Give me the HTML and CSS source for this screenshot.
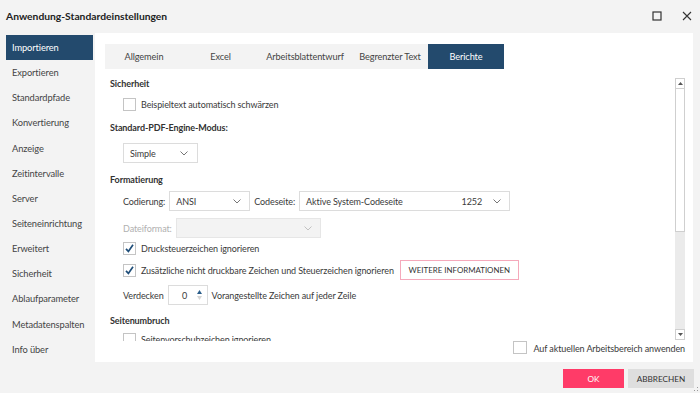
FILE: index.html
```html
<!DOCTYPE html>
<html lang="de">
<head>
  <meta charset="UTF-8" />
  <title>Anwendung-Standardeinstellungen</title>
  <link rel="stylesheet" href="styles.css">
</head>
<body>
  <div class="dialog">
    <!-- ========== TITLE BAR ========== -->
    <div class="titlebar">
      <div class="title">Anwendung-Standardeinstellungen</div>
      <div class="window-buttons">
        <svg class="win-icon" width="10" height="10" viewBox="0 0 10 10"><rect x="1" y="1" width="8" height="8" fill="none" stroke="#333" stroke-width="1.2"/></svg>
        <svg class="win-icon" width="10" height="10" viewBox="0 0 10 10"><path d="M1 1 L9 9 M9 1 L1 9" stroke="#333" stroke-width="1.1"/></svg>
      </div>
    </div>

    <div class="main">
      <!-- ========== LEFT NAV ========== -->
      <div class="nav">
        <div class="nav-item active">Importieren</div>
        <div class="nav-item">Exportieren</div>
        <div class="nav-item">Standardpfade</div>
        <div class="nav-item">Konvertierung</div>
        <div class="nav-item">Anzeige</div>
        <div class="nav-item">Zeitintervalle</div>
        <div class="nav-item">Server</div>
        <div class="nav-item">Seiteneinrichtung</div>
        <div class="nav-item">Erweitert</div>
        <div class="nav-item">Sicherheit</div>
        <div class="nav-item">Ablaufparameter</div>
        <div class="nav-item">Metadatenspalten</div>
        <div class="nav-item">Info über</div>
      </div>

      <!-- ========== PANEL ========== -->
      <div class="panel">
        <div class="tabs">
          <div class="tab">Allgemein</div>
          <div class="tab">Excel</div>
          <div class="tab">Arbeitsblattentwurf</div>
          <div class="tab">Begrenzter Text</div>
          <div class="tab active">Berichte</div>
        </div>

        <div class="body-row">
          <div class="scroll-content">
            <div class="section-title first">Sicherheit</div>
            <div class="row cb-row gap4">
              <span class="checkbox"></span>
              <span>Beispieltext automatisch schwärzen</span>
            </div>

            <div class="section-title">Standard-PDF-Engine-Modus:</div>
            <div class="row gap7">
              <div class="select select-simple">
                <span>Simple</span>
                <svg class="chevron" width="8" height="5" viewBox="0 0 8 5"><path d="M0.5 0.5 L4 4 L7.5 0.5" fill="none" stroke="#666" stroke-width="0.9"/></svg>
              </div>
            </div>

            <div class="section-title gap9">Formatierung</div>
            <div class="row gap3">
              <span class="label">Codierung:</span>
              <div class="select select-ansi">
                <span>ANSI</span>
                <svg class="chevron" width="8" height="5" viewBox="0 0 8 5"><path d="M0.5 0.5 L4 4 L7.5 0.5" fill="none" stroke="#666" stroke-width="0.9"/></svg>
              </div>
              <span class="label">Codeseite:</span>
              <div class="select select-codepage">
                <span class="grow">Aktive System-Codeseite</span>
                <span class="codepage-num">1252</span>
                <svg class="chevron" width="8" height="5" viewBox="0 0 8 5"><path d="M0.5 0.5 L4 4 L7.5 0.5" fill="none" stroke="#666" stroke-width="0.9"/></svg>
              </div>
            </div>
            <div class="row gap7">
              <span class="label disabled-label">Dateiformat:</span>
              <div class="select select-disabled">
                <span class="grow"></span>
                <svg class="chevron" width="8" height="5" viewBox="0 0 8 5"><path d="M0.5 0.5 L4 4 L7.5 0.5" fill="none" stroke="#bbb" stroke-width="0.9"/></svg>
              </div>
            </div>
            <div class="row cb-row gap2">
              <span class="checkbox checked">
                <svg width="11" height="11" viewBox="0 0 11 11"><path d="M2 5.8 L4.4 8.4 L9 1.8" fill="none" stroke="#1f4e79" stroke-width="1.7"/></svg>
              </span>
              <span>Drucksteuerzeichen ignorieren</span>
            </div>
            <div class="row btn-row gap4">
              <span class="checkbox checked">
                <svg width="11" height="11" viewBox="0 0 11 11"><path d="M2 5.8 L4.4 8.4 L9 1.8" fill="none" stroke="#1f4e79" stroke-width="1.7"/></svg>
              </span>
              <span>Zusätzliche nicht druckbare Zeichen und Steuerzeichen ignorieren</span>
              <div class="outline-btn">WEITERE INFORMATIONEN</div>
            </div>
            <div class="row gap5">
              <span class="label">Verdecken</span>
              <div class="spinner">
                <span class="spinner-value">0</span>
                <div class="spinner-arrows">
                  <svg width="5" height="4" viewBox="0 0 5 4"><path d="M0 4 L2.5 0 L5 4 Z" fill="#2a5d8a"/></svg>
                  <svg width="5" height="4" viewBox="0 0 5 4"><path d="M0 0 L2.5 4 L5 0 Z" fill="#d4d4d4"/></svg>
                </div>
              </div>
              <span>Vorangestellte Zeichen auf jeder Zeile</span>
            </div>

            <div class="section-title">Seitenumbruch</div>
            <div class="row cb-row gap2">
              <span class="checkbox"></span>
              <span>Seitenvorschubzeichen ignorieren</span>
            </div>
          </div>

          <div class="scrollbar">
            <div class="sb-btn">
              <svg width="5" height="3" viewBox="0 0 5 3"><path d="M0 3 L2.5 0 L5 3 Z" fill="#555"/></svg>
            </div>
            <div class="sb-thumb"></div>
            <div class="sb-track"></div>
            <div class="sb-btn">
              <svg width="5" height="3" viewBox="0 0 5 3"><path d="M0 0 L2.5 3 L5 0 Z" fill="#555"/></svg>
            </div>
          </div>
        </div>

        <div class="panel-footer">
          <span class="checkbox"></span>
          <span>Auf aktuellen Arbeitsbereich anwenden</span>
        </div>
      </div>
    </div>

    <!-- ========== FOOTER BUTTONS ========== -->
    <div class="footer">
      <div class="btn btn-ok">OK</div>
      <div class="btn btn-cancel">ABBRECHEN</div>
      <svg class="grip" width="5" height="5" viewBox="0 0 5 5"><rect x="3" y="0" width="1" height="1" fill="#999"/><rect x="3" y="3" width="1" height="1" fill="#999"/><rect x="0" y="3" width="1" height="1" fill="#999"/></svg>
    </div>
  </div>
</body>
</html>
```

FILE: styles.css
```css
* {
  margin: 0;
  padding: 0;
  box-sizing: border-box;
}

body {
  font-family: 'Lato', 'Noto Sans', sans-serif;
  font-size: 9px;
  letter-spacing: -0.1px;
  color: #3a3a3a;
  background: #f3f3f3;
  width: 700px;
  height: 393px;
  overflow: hidden;
}

.dialog {
  display: flex;
  flex-direction: column;
  height: 393px;
}

/* =========================================
   TITLE BAR
   ========================================= */
.titlebar {
  height: 33px;
  display: flex;
  align-items: center;
  justify-content: space-between;
  padding: 0 8px 2px 6px;
}

.title {
  font-size: 10.3px;
  font-weight: 700;
  letter-spacing: 0;
  color: #222;
}

.window-buttons {
  display: flex;
  gap: 20px;
}

/* =========================================
   MAIN AREA
   ========================================= */
.main {
  display: flex;
  height: 329px;
}

.nav {
  width: 95px;
  padding-top: 2px;
  flex-shrink: 0;
}

.nav-item {
  height: 25.15px;
  display: flex;
  align-items: center;
  padding-left: 12px;
  font-size: 9.3px;
  color: #444;
}

.nav-item.active {
  margin-left: 6px;
  width: 87px;
  padding-left: 6px;
  background: #234a6d;
  color: #fff;
}

.panel {
  flex: 1;
  background: #fff;
  margin-right: 7px;
  padding: 11px 8px 0 10px;
  display: flex;
  flex-direction: column;
}

/* Tabs */
.tabs {
  display: grid;
  grid-template-columns: 78px 75px 94px 76px 76px;
  height: 25px;
  width: 399px;
  background: #f3f3f3;
  flex-shrink: 0;
}

.tab {
  display: flex;
  align-items: center;
  justify-content: center;
  font-size: 9.2px;
  color: #444;
  white-space: nowrap;
}

.tab.active {
  background: #234a6d;
  color: #fff;
}

/* Body with scroll area */
.body-row {
  display: flex;
  height: 272px;
}

.scroll-content {
  flex: 1;
  overflow: hidden;
  padding-left: 5px;
}

.section-title {
  height: 16px;
  line-height: 16px;
  font-weight: 700;
  color: #333;
  margin-top: 8px;
}

.section-title.first {
  margin-top: 7px;
}

.row {
  display: flex;
  align-items: center;
  height: 20px;
  padding-left: 13px;
  white-space: nowrap;
}

.row.cb-row {
  height: 16px;
}

.gap2 { margin-top: 2px; }
.gap3 { margin-top: 3px; }
.gap4 { margin-top: 4px; }
.gap5 { margin-top: 5px; }
.gap7 { margin-top: 7px; }
.section-title.gap9 { margin-top: 9px; }

.label {
  margin-right: 4px;
}

.disabled-label {
  color: #b0b0b0;
}

.checkbox {
  width: 13px;
  height: 13px;
  border: 1px solid #c4c4c4;
  background: #fff;
  margin-right: 5px;
  flex-shrink: 0;
  display: flex;
  align-items: center;
  justify-content: center;
}

/* Select boxes */
.select {
  height: 20px;
  border: 1px solid #dcdcdc;
  display: flex;
  align-items: center;
  padding: 0 8px 0 6px;
  background: #fff;
}

.select .grow {
  flex: 1;
}

.select-simple {
  width: 75px;
  justify-content: space-between;
}

.select-simple .chevron {
  margin-right: 1px;
}

.select-ansi {
  width: 81px;
  justify-content: space-between;
  margin-right: 4px;
}

.select-codepage {
  width: 211px;
}

.codepage-num {
  margin-right: 11px;
}

.select-disabled {
  width: 145px;
  background: #f3f3f3;
  border-color: #e6e6e6;
}

.outline-btn {
  height: 20px;
  width: 119px;
  margin-left: 6px;
  display: flex;
  align-items: center;
  justify-content: center;
  border: 1px solid #f5a9bb;
  color: #333;
  font-size: 7.9px;
  letter-spacing: 0;
}

.btn-row {
  height: 20px;
}

/* Spinner */
.spinner {
  width: 40px;
  height: 20px;
  border: 1px solid #dcdcdc;
  display: flex;
  align-items: center;
  margin-right: 4px;
}

.spinner-value {
  flex: 1;
  text-align: center;
  padding-left: 4px;
}

.spinner-arrows {
  width: 10px;
  display: flex;
  flex-direction: column;
  gap: 2px;
}

/* Scrollbar */
.scrollbar {
  width: 10px;
  margin-top: 9px;
  height: 262px;
  display: flex;
  flex-direction: column;
}

.sb-btn {
  height: 11px;
  border: 1px solid #cfcfcf;
  background: #fff;
  display: flex;
  align-items: center;
  justify-content: center;
}

.sb-thumb {
  height: 143px;
  border: 1px solid #cfcfcf;
  border-top: none;
  background: #fff;
}

.sb-track {
  flex: 1;
  background: #ebebeb;
}

.panel-footer {
  height: 21px;
  display: flex;
  align-items: flex-start;
  justify-content: flex-end;
  white-space: nowrap;
}

.panel-footer span:last-child {
  line-height: 13px;
  margin-top: 1px;
}

.panel-footer .checkbox {
  width: 14px;
  height: 13px;
  margin-right: 6px;
}

/* =========================================
   FOOTER BUTTONS
   ========================================= */
.footer {
  flex: 1;
  display: flex;
  align-items: flex-start;
  justify-content: flex-end;
  padding: 7px 6px 0 0;
  gap: 4px;
  position: relative;
}

.btn {
  height: 19px;
  display: flex;
  align-items: center;
  justify-content: center;
  font-size: 8.2px;
  letter-spacing: 0;
}

.btn-ok {
  width: 61px;
  background: #ff3b68;
  color: #fff;
}

.btn-cancel {
  width: 66px;
  background: #dedede;
  color: #333;
}

.grip {
  position: absolute;
  right: 1px;
  bottom: 1px;
}
```
